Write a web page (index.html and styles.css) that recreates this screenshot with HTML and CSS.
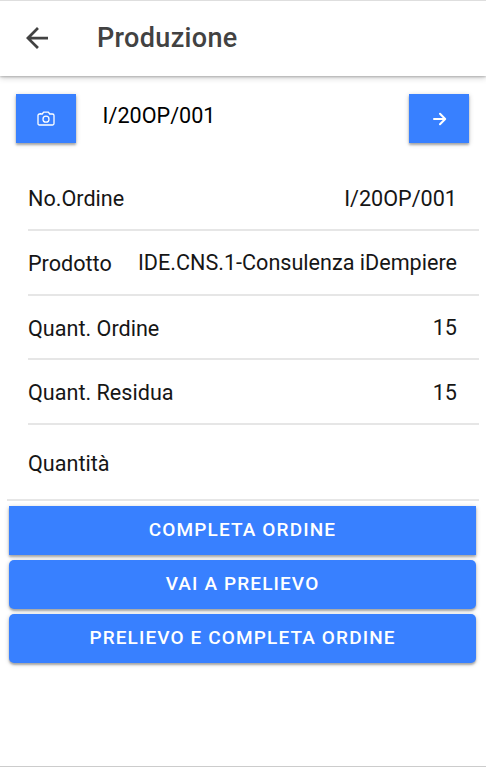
FILE: index.html
```html
<!DOCTYPE html>
<html lang="it">
<head>
<meta charset="utf-8">
<title>Produzione</title>
<link rel="stylesheet" href="styles.css">
</head>
<body>
<header class="toolbar">
  <svg class="back" viewBox="0 0 24 24"><path d="M24 10.500H5.700L14.100 2.100 12 0 0 12l12 12 2.100-2.100-8.400-8.400H24z"/></svg>
  <h1 class="title">Produzione</h1>
</header>
<main class="content">
  <section class="scan">
    <button class="btn small" aria-label="Fotocamera">
      <svg class="camera" viewBox="0 0 18 16"><path d="M5.3 3 6.6 1.2h4.8L12.700 3h2.800q1.500 0 1.500 1.500v8q0 1.500-1.500 1.500h-13Q1 14 1 12.500v-8Q1 3 2.500 3zM3.500 3V2"/><circle cx="9" cy="8.200" r="3"/></svg>
    </button>
    <span class="code">I/20OP/001</span>
    <button class="btn small" aria-label="Avanti">
      <svg class="next" viewBox="0 0 14 14"><path d="M1 7h11M7 1.800 12.200 7 7 12.200"/></svg>
    </button>
  </section>
  <dl class="list">
    <div class="row"><dt>No.Ordine</dt><dd>I/20OP/001</dd></div>
    <div class="row"><dt>Prodotto</dt><dd>IDE.CNS.1-Consulenza iDempiere</dd></div>
    <div class="row"><dt>Quant. Ordine</dt><dd>15</dd></div>
    <div class="row"><dt>Quant. Residua</dt><dd>15</dd></div>
    <div class="row quantity"><dt>Quantità</dt><dd></dd></div>
  </dl>
  <section class="actions">
    <button class="btn square">COMPLETA ORDINE</button>
    <button class="btn">VAI A PRELIEVO</button>
    <button class="btn">PRELIEVO E COMPLETA ORDINE</button>
  </section>
</main>
</body>
</html>
```
FILE: styles.css
```css
* { box-sizing: border-box; }
body {
  margin: 0;
  height: 767px;
  display: flex;
  flex-direction: column;
  border-top: 1px solid #dedede;
  border-bottom: 1px solid #ccc;
  background: #fff;
  color: #161616;
  font: 400 21.6px/28px Roboto, sans-serif;
}
.toolbar {
  height: 75px;
  display: flex;
  align-items: center;
  padding: 0 0 1px 25px;
  box-shadow: 0 1px 2px rgba(0, 0, 0, .22), 0 2px 6px rgba(0, 0, 0, .18);
}
.back { width: 24px; height: 22px; margin-bottom: 1px; fill: #424242; }
.title {
  margin: 0 0 0 48px;
  color: #424242;
  font-size: 27px;
  font-weight: 500;
  line-height: 34px;
  letter-spacing: .34px;
}
.content { flex: 1; }
.scan {
  display: flex;
  align-items: flex-start;
  padding: 18.400px 17px 0 16px;
}
.code { flex: 1; margin: 7.600px 0 0 26.600px; color: #000; }
.btn {
  display: flex;
  align-items: center;
  justify-content: center;
  height: 49px;
  padding: 0 0 1px;
  border: 0;
  border-radius: 5px;
  background: #3880ff;
  color: #fff;
  font: 500 19px/24px Roboto, sans-serif;
  letter-spacing: 1.12px;
  box-shadow: 0 2px 2px rgba(0, 0, 0, .26), 0 1px 5px rgba(0, 0, 0, .2);
}
.small { width: 60px; padding: 0 0 0 1px; border-radius: 0; }
.small:first-child { padding: 0 1px 0 0; }
.camera { width: 18px; height: 16px; }
.next { width: 14px; height: 14px; }
.camera, .next { fill: none; stroke: #fff; stroke-width: 1.3; stroke-linejoin: round; }
.next { stroke-width: 2; stroke-linecap: round; }
.list { margin: 22.600px 7px 0; }
.row {
  display: flex;
  align-items: center;
  justify-content: space-between;
  height: 64.800px;
  margin-left: 21px;
  padding: 3.400px 22px 0 0;
  border-bottom: 2px solid #e6e6e6;
}
.row dd { margin: 0; padding-bottom: 1px; }
.quantity { height: 75.800px; margin-left: 0; padding-left: 21px; }
.actions { display: grid; gap: 5px; padding: 5px 10px 0 9px; }
.square { border-radius: 0; }
```
